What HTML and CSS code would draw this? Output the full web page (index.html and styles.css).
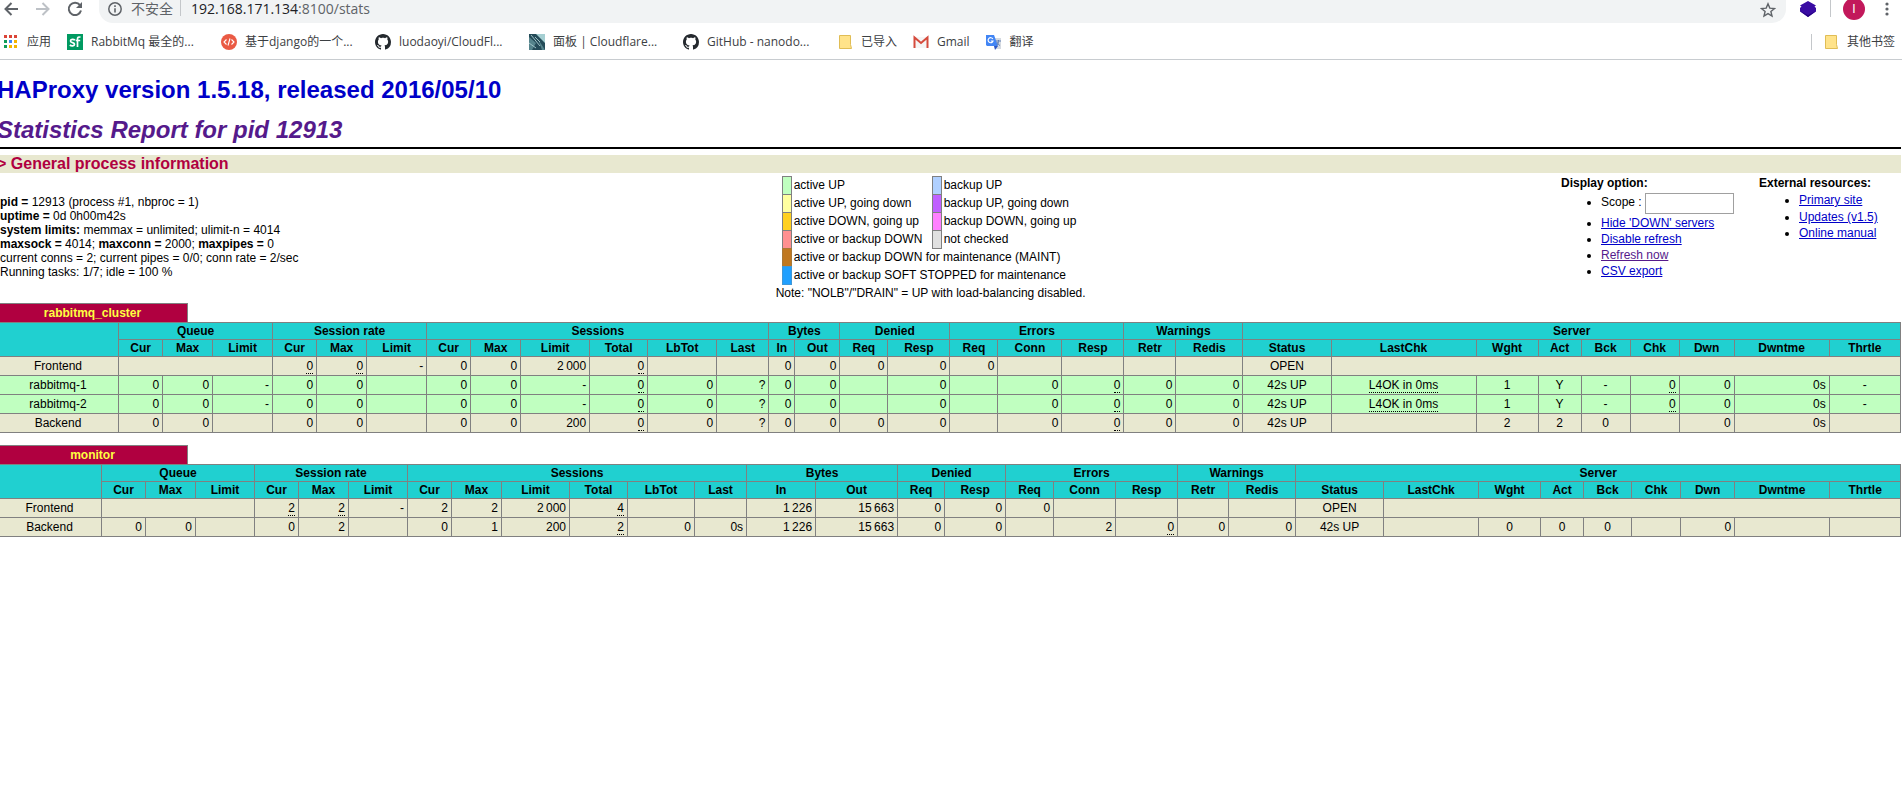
FILE: index.html
```
<!DOCTYPE html>
<html lang="en">
<head>
<meta charset="utf-8">
<title>Statistics Report for HAProxy</title>
<link rel="stylesheet" href="styles.css">
</head>
<body>
<header class="browser">
  <div class="toolbar">
    <button class="nav" aria-label="Back"><svg width="16" height="16" viewBox="0 0 16 16"><path d="M15 8H2.500M8.500 2 2.500 8l6 6" fill="none" stroke="#5f6368" stroke-width="2"/></svg></button>
    <button class="nav" aria-label="Forward"><svg width="16" height="16" viewBox="0 0 16 16"><path d="M1 8h12.500M7.500 2l6 6-6 6" fill="none" stroke="#bdc1c6" stroke-width="2"/></svg></button>
    <button class="nav" aria-label="Reload"><svg width="16" height="16" viewBox="0 0 16 16"><path d="M13 4.200A6.200 6.200 0 1 0 14 9.500" fill="none" stroke="#5f6368" stroke-width="2"/><path d="M15 1v6H9z" fill="#5f6368"/></svg></button>
    <div class="omnibox">
      <svg width="16" height="16" viewBox="0 0 16 16"><circle cx="8" cy="8" r="6.200" fill="none" stroke="#5f6368" stroke-width="1.500"/><path d="M8 7.200v4.200M8 4.300v1.600" stroke="#5f6368" stroke-width="1.600"/></svg>
      <span class="insecure">不安全</span>
      <span class="url">192.168.171.134<span class="path">:8100/stats</span></span>
      <button class="star" aria-label="Bookmark"><svg width="16" height="16" viewBox="0 0 16 16"><path d="m8 1.800 1.800 4.300 4.700.4-3.600 3 1.100 4.600L8 11.600l-4 2.500 1.100-4.600-3.600-3 4.700-.4z" fill="none" stroke="#5f6368" stroke-width="1.400"/></svg></button>
    </div>
    <button class="ext" aria-label="Extension"><svg width="16" height="16" viewBox="0 0 16 16"><path d="m8 0 8 4.500-1.500 1L16 7v3.500L8 16l-8-5.500V7l1.500-1.500L0 4.500z" fill="#3a0ca3"/><path d="m0 10 8 4 8-4-8 6z" fill="#250080"/></svg></button>
    <button class="avatar" aria-label="Profile">I</button>
    <button class="menu" aria-label="Menu"><svg width="4" height="16" viewBox="0 0 4 16"><g fill="#5f6368"><circle cx="2" cy="3" r="1.600"/><circle cx="2" cy="8" r="1.600"/><circle cx="2" cy="13" r="1.600"/></g></svg></button>
  </div>
  <nav class="bookmarks">
    <a href="#"><svg width="16" height="16" viewBox="0 0 16 16"><g fill="#db4437"><path d="M1 1h3v3H1zM6 1h3v3H6zM11 1h3v3h-3z"/></g><path d="M1 6h3v3H1z" fill="#0f9d58"/><path d="M6 6h3v3H6z" fill="#4285f4"/><path d="M11 6h3v3h-3zM6 11h3v3H6zM11 11h3v3h-3z" fill="#f4b400"/><path d="M1 11h3v3H1z" fill="#0f9d58"/></svg><span>应用</span></a>
    <a href="#" class="long"><svg width="16" height="16" viewBox="0 0 16 16"><path d="M0 0h16v16H0z" fill="#009a61"/><path d="M8 6.200C6.500 5 3.500 5 3.500 7c0 2 4 1.200 4 3.200 0 2-3.200 2-4.700.8M13.500 3.300c-2-.8-3 0-3 1.700v8M8.700 6.500h4.500" fill="none" stroke="#fff" stroke-width="1.700"/></svg><span>RabbitMq 最全的...</span></a>
    <a href="#" class="long"><svg width="16" height="16" viewBox="0 0 16 16"><circle cx="8" cy="8" r="8" fill="#ea5a44"/><path d="M5.500 5.500 3 8l2.500 2.500M10.500 5.500 13 8l-2.500 2.500M9 4.500l-2 7" fill="none" stroke="#fff" stroke-width="1.100"/></svg><span>基于django的一个...</span></a>
    <a href="#" class="long"><svg width="16" height="16" viewBox="0 0 16 16"><path d="M8 0C3.580 0 0 3.580 0 8c0 3.540 2.290 6.530 5.470 7.590.4.070.55-.17.55-.38 0-.19-.01-.82-.01-1.490-2.010.37-2.530-.49-2.690-.94-.09-.23-.48-.94-.82-1.130-.28-.15-.68-.52-.01-.53.63-.01 1.080.58 1.230.82.72 1.210 1.870.87 2.330.66.070-.52.28-.87.51-1.070-1.780-.2-3.640-.89-3.640-3.950 0-.87.31-1.590.82-2.150-.08-.2-.36-1.020.08-2.120 0 0 .67-.21 2.200.82.64-.18 1.320-.27 2-.27s1.360.09 2 .27c1.530-1.040 2.200-.82 2.200-.82.44 1.100.16 1.920.08 2.120.51.56.82 1.270.82 2.150 0 3.070-1.870 3.750-3.650 3.950.29.25.54.73.54 1.480 0 1.070-.01 1.930-.01 2.200 0 .21.15.46.55.38A8 8 0 0 0 16 8c0-4.420-3.580-8-8-8z" fill="#24292e"/></svg><span>luodaoyi/CloudFl...</span></a>
    <a href="#" class="long"><svg width="16" height="16" viewBox="0 0 16 16"><path d="M0 0h16v16H0z" fill="#244b58"/><path d="M7 0h9v9z" fill="#a5cfd2"/><path d="m0 3 7 6-4 7H0zM9 5l7 11h-3z" fill="#55848c"/><path d="m2 1 9 11M6 3l5 5M0 9l7 5" stroke="#9fc2c6" fill="none"/></svg><span>面板 | Cloudflare...</span></a>
    <a href="#" class="long"><svg width="16" height="16" viewBox="0 0 16 16"><path d="M8 0C3.580 0 0 3.580 0 8c0 3.540 2.290 6.530 5.470 7.590.4.070.55-.17.55-.38 0-.19-.01-.82-.01-1.490-2.010.37-2.530-.49-2.690-.94-.09-.23-.48-.94-.82-1.130-.28-.15-.68-.52-.01-.53.63-.01 1.080.58 1.230.82.72 1.210 1.870.87 2.330.66.070-.52.28-.87.51-1.070-1.780-.2-3.640-.89-3.640-3.950 0-.87.31-1.590.82-2.150-.08-.2-.36-1.020.08-2.120 0 0 .67-.21 2.200.82.64-.18 1.320-.27 2-.27s1.360.09 2 .27c1.530-1.040 2.200-.82 2.200-.82.44 1.100.16 1.920.08 2.120.51.56.82 1.270.82 2.150 0 3.070-1.870 3.750-3.650 3.950.29.25.54.73.54 1.480 0 1.070-.01 1.930-.01 2.200 0 .21.15.46.55.38A8 8 0 0 0 16 8c0-4.420-3.580-8-8-8z" fill="#24292e"/></svg><span>GitHub - nanodo...</span></a>
    <a href="#"><svg width="16" height="16" viewBox="0 0 16 16"><path d="M2.500 1.500h11v9l1 4h-12z" fill="#ffe38a" stroke="#e0bd55"/></svg><span>已导入</span></a>
    <a href="#"><svg width="16" height="16" viewBox="0 0 16 16"><path d="M1 3h14v11H1z" fill="#f5f5f5"/><path d="M1.500 14V3.500L8 9l6.500-5.500V14" fill="none" stroke="#d54b3d" stroke-width="2"/></svg><span>Gmail</span></a>
    <a href="#"><svg width="16" height="16" viewBox="0 0 16 16"><path d="M6 4h9v11H9z" fill="#d5dae1"/><path d="M0 1h8l4 11H1l-1-1z" fill="#4285f4"/><path d="m8 12 4 0-3 4z" fill="#2a56c6"/><path d="M6.800 5A2.500 2.500 0 1 0 7 7H4.800" fill="none" stroke="#fff" stroke-width="1.200"/><path d="M10 7h5M12.500 6v1.500c0 2-1 3-2 4M11 8c.5 2 2 3 3 3.500" fill="none" stroke="#5c7cb5"/></svg><span>翻译</span></a>
    <a href="#" class="other"><svg width="16" height="16" viewBox="0 0 16 16"><path d="M2.500 1.500h11v9l1 4h-12z" fill="#ffe38a" stroke="#e0bd55"/></svg><span>其他书签</span></a>
  </nav>
</header>
<main class="page">
  <h1><a href="#">HAProxy version 1.5.18, released 2016/05/10</a></h1>
  <h2><a href="#">Statistics Report for pid 12913</a></h2>
  <hr>
  <h3>&gt; General process information</h3>
  <section class="info">
    <p class="process"><b>pid = </b> 12913 (process #1, nbproc = 1)<br>
      <b>uptime = </b> 0d 0h00m42s<br>
      <b>system limits:</b> memmax = unlimited; ulimit-n = 4014<br>
      <b>maxsock = </b> 4014; <b>maxconn = </b> 2000; <b>maxpipes = </b> 0<br>
      current conns = 2; current pipes = 0/0; conn rate = 2/sec<br>
      Running tasks: 1/7; idle = 100 %</p>
    <div class="legend">
      <dl>
        <dt class="up"></dt><dd>active UP</dd><dt class="bup"></dt><dd>backup UP</dd>
        <dt class="goingdown"></dt><dd>active UP, going down</dd><dt class="bgoingdown"></dt><dd>backup UP, going down</dd>
        <dt class="goingup"></dt><dd>active DOWN, going up</dd><dt class="bgoingup"></dt><dd>backup DOWN, going up</dd>
        <dt class="down"></dt><dd>active or backup DOWN</dd><dt class="nocheck"></dt><dd>not checked</dd>
        <dt class="maint"></dt><dd class="wide">active or backup DOWN for maintenance (MAINT)</dd>
        <dt class="stopped"></dt><dd class="wide">active or backup SOFT STOPPED for maintenance</dd>
      </dl>
      <p>Note: "NOLB"/"DRAIN" = UP with load-balancing disabled.</p>
    </div>
    <div class="options">
      <b>Display option:</b>
      <ul>
        <li><label for="scope">Scope :</label> <input id="scope" type="text"></li>
        <li><a href="#">Hide 'DOWN' servers</a></li>
        <li><a href="#">Disable refresh</a></li>
        <li><a href="#" class="visited">Refresh now</a></li>
        <li><a href="#">CSV export</a></li>
      </ul>
    </div>
    <div class="resources">
      <b>External resources:</b>
      <ul>
        <li><a href="#">Primary site</a></li>
        <li><a href="#">Updates (v1.5)</a></li>
        <li><a href="#">Online manual</a></li>
      </ul>
    </div>
  </section>

  <section class="proxy">
    <div class="pxname">rabbitmq_cluster</div>
    <table class="tbl cluster">
      <colgroup><col><col><col><col><col><col><col><col><col><col><col><col><col><col><col><col><col><col><col><col><col><col><col><col><col><col><col><col><col><col><col></colgroup>
      <thead>
        <tr><th rowspan="2"></th><th colspan="3">Queue</th><th colspan="3">Session rate</th><th colspan="6">Sessions</th><th colspan="2">Bytes</th><th colspan="2">Denied</th><th colspan="3">Errors</th><th colspan="2">Warnings</th><th colspan="9">Server</th></tr>
        <tr><th>Cur</th><th>Max</th><th>Limit</th><th>Cur</th><th>Max</th><th>Limit</th><th>Cur</th><th>Max</th><th>Limit</th><th>Total</th><th>LbTot</th><th>Last</th><th>In</th><th>Out</th><th>Req</th><th>Resp</th><th>Req</th><th>Conn</th><th>Resp</th><th>Retr</th><th>Redis</th><th>Status</th><th>LastChk</th><th>Wght</th><th>Act</th><th>Bck</th><th>Chk</th><th>Dwn</th><th>Dwntme</th><th>Thrtle</th></tr>
      </thead>
      <tbody>
        <tr><td class="ac">Frontend</td><td colspan="3"></td><td><u>0</u></td><td><u>0</u></td><td>-</td><td>0</td><td>0</td><td>2&#8201;000</td><td><u>0</u></td><td></td><td></td><td>0</td><td>0</td><td>0</td><td>0</td><td>0</td><td></td><td></td><td></td><td></td><td class="ac">OPEN</td><td colspan="8"></td></tr>
        <tr class="active"><td class="ac">rabbitmq-1</td><td>0</td><td>0</td><td>-</td><td>0</td><td>0</td><td></td><td>0</td><td>0</td><td>-</td><td><u>0</u></td><td>0</td><td>?</td><td>0</td><td>0</td><td></td><td>0</td><td></td><td>0</td><td><u>0</u></td><td>0</td><td>0</td><td class="ac">42s UP</td><td class="ac"><u>L4OK in 0ms</u></td><td class="ac">1</td><td class="ac">Y</td><td class="ac">-</td><td><u>0</u></td><td>0</td><td>0s</td><td class="ac">-</td></tr>
        <tr class="active"><td class="ac">rabbitmq-2</td><td>0</td><td>0</td><td>-</td><td>0</td><td>0</td><td></td><td>0</td><td>0</td><td>-</td><td><u>0</u></td><td>0</td><td>?</td><td>0</td><td>0</td><td></td><td>0</td><td></td><td>0</td><td><u>0</u></td><td>0</td><td>0</td><td class="ac">42s UP</td><td class="ac"><u>L4OK in 0ms</u></td><td class="ac">1</td><td class="ac">Y</td><td class="ac">-</td><td><u>0</u></td><td>0</td><td>0s</td><td class="ac">-</td></tr>
        <tr><td class="ac">Backend</td><td>0</td><td>0</td><td></td><td>0</td><td>0</td><td></td><td>0</td><td>0</td><td>200</td><td><u>0</u></td><td>0</td><td>?</td><td>0</td><td>0</td><td>0</td><td>0</td><td></td><td>0</td><td><u>0</u></td><td>0</td><td>0</td><td class="ac">42s UP</td><td></td><td class="ac">2</td><td class="ac">2</td><td class="ac">0</td><td></td><td>0</td><td>0s</td><td></td></tr>
      </tbody>
    </table>
  </section>

  <section class="proxy">
    <div class="pxname">monitor</div>
    <table class="tbl monitor">
      <colgroup><col><col><col><col><col><col><col><col><col><col><col><col><col><col><col><col><col><col><col><col><col><col><col><col><col><col><col><col><col><col><col></colgroup>
      <thead>
        <tr><th rowspan="2"></th><th colspan="3">Queue</th><th colspan="3">Session rate</th><th colspan="6">Sessions</th><th colspan="2">Bytes</th><th colspan="2">Denied</th><th colspan="3">Errors</th><th colspan="2">Warnings</th><th colspan="9">Server</th></tr>
        <tr><th>Cur</th><th>Max</th><th>Limit</th><th>Cur</th><th>Max</th><th>Limit</th><th>Cur</th><th>Max</th><th>Limit</th><th>Total</th><th>LbTot</th><th>Last</th><th>In</th><th>Out</th><th>Req</th><th>Resp</th><th>Req</th><th>Conn</th><th>Resp</th><th>Retr</th><th>Redis</th><th>Status</th><th>LastChk</th><th>Wght</th><th>Act</th><th>Bck</th><th>Chk</th><th>Dwn</th><th>Dwntme</th><th>Thrtle</th></tr>
      </thead>
      <tbody>
        <tr><td class="ac">Frontend</td><td colspan="3"></td><td><u>2</u></td><td><u>2</u></td><td>-</td><td>2</td><td>2</td><td>2&#8201;000</td><td><u>4</u></td><td></td><td></td><td>1&#8201;226</td><td>15&#8201;663</td><td>0</td><td>0</td><td>0</td><td></td><td></td><td></td><td></td><td class="ac">OPEN</td><td colspan="8"></td></tr>
        <tr><td class="ac">Backend</td><td>0</td><td>0</td><td></td><td>0</td><td>2</td><td></td><td>0</td><td>1</td><td>200</td><td><u>2</u></td><td>0</td><td>0s</td><td>1&#8201;226</td><td>15&#8201;663</td><td>0</td><td>0</td><td></td><td>2</td><td><u>0</u></td><td>0</td><td>0</td><td class="ac">42s UP</td><td></td><td class="ac">0</td><td class="ac">0</td><td class="ac">0</td><td></td><td>0</td><td></td><td></td></tr>
      </tbody>
    </table>
  </section>
</main>
</body>
</html>
```
FILE: styles.css
```
* { box-sizing: border-box; }
body {
  margin: 0;
  overflow-x: hidden;
  background: #fff;
  color: #000;
  font: 12px/14px "Liberation Sans", Arial, sans-serif;
}
button { margin: 0; padding: 0; border: 0; background: none; }
svg { display: block; flex: none; }
p, ul, dl, dd, h1, h2, h3 { margin: 0; padding: 0; }

/* browser bar */
.browser {
  height: 60px;
  border-bottom: 1px solid #c8ccd0;
  color: #3c4043;
  font-family: "Open Sans", "Noto Sans CJK SC", sans-serif;
}
.toolbar {
  display: flex;
  height: 23px;
  padding: 0 13px 0 3px;
}
.nav { flex: none; width: 16px; height: 18px; margin-right: 16px; }
.omnibox {
  display: flex;
  flex: 1;
  height: 23px;
  padding: 0 10px 0 8px;
  border-radius: 0 0 14px 14px;
  background: #f1f3f4;
  font-size: 14px;
  line-height: 18px;
}
.omnibox svg, .ext svg, .menu svg { margin-top: 1px; }
.insecure {
  height: 16px;
  margin: 0 10px 0 8px;
  padding-right: 7px;
  border-right: 1px solid #c4c7ca;
  line-height: 18px;
  color: #5f6368;
}
.url { color: #202124; }
.path { color: #5f6368; }
.star { height: 18px; margin-left: auto; }
.ext {
  height: 17px;
  margin-left: 14px;
  padding-right: 14px;
  border-right: 1px solid #c4c7ca;
}
.avatar {
  width: 22px;
  height: 22px;
  margin: -2px 20px 0 12px;
  border-radius: 50%;
  background: #c2185b;
  color: #fff;
  font-size: 12px;
}
.menu { height: 17px; }
.bookmarks {
  display: flex;
  align-items: center;
  gap: 16px;
  height: 37px;
  padding: 0 7px 0 3px;
}
.bookmarks a {
  display: flex;
  align-items: center;
  gap: 8px;
  color: #3c4043;
  text-decoration: none;
  line-height: 16px;
  white-space: nowrap;
}
.bookmarks .long { width: 138px; }
.bookmarks .other {
  margin-left: auto;
  padding-left: 11px;
  border-left: 1px solid #c4c7ca;
}

/* report */
.page { margin: 0 1px 0 -3px; }
h1, h2 { font-size: 24px; line-height: 28px; }
h1 { padding-top: 16px; }
h2 { padding-top: 12px; font-style: italic; }
h1 a { color: #0000c8; text-decoration: none; }
h2 a { color: #551a8b; text-decoration: none; }
hr { margin: 3px 0 6px; border: 0; border-top: 2px solid #000; }
h3 {
  background: #e8e8d0;
  color: #b00040;
  font-size: 16px;
  line-height: 18px;
}
.info { display: flex; height: 130px; }
.process { flex: 0 0 41%; padding: 22px 0 0 3px; }
.legend { margin-left: -2px; padding-top: 3px; }
.legend dl {
  display: grid;
  grid-template-columns: 10px 140px 10px 150px;
  grid-auto-rows: 18px;
  margin-left: 6px;
}
.legend dt { height: 19px; border: 1px solid gray; }
.legend dd { padding: 2px; white-space: nowrap; }
.legend .wide { grid-column: span 3; }
.legend p { padding-top: 2px; }
.up { background: #c0ffc0; }
.bup { background: #b0d0ff; }
.goingdown { background: #ffffa0; }
.bgoingdown { background: #c060ff; }
.goingup { background: #ffd020; }
.bgoingup { background: #ff80ff; }
.down { background: #ff9090; }
.nocheck { background: #e0e0e0; }
.legend .maint { background: #c07820; border-color: #a87838; }
.legend .stopped { background: #20a0ff; border-color: #4098d8; }
.options { flex: 0 0 198px; margin-left: auto; padding-top: 3px; }
.resources { flex: 0 0 142px; padding-top: 3px; }
.info ul { padding-left: 40px; }
.info li { margin-top: 3px; white-space: nowrap; }
.info li:nth-child(n+3) { margin-top: 2px; }
.info li a { color: #0000c8; }
.info li .visited { color: #551a8b; }
.info input {
  width: 89px;
  height: 21px;
  margin: 0 0 -1px;
  padding: 1px 2px;
  border: 1px solid #a0a0a0;
  font: inherit;
  vertical-align: middle;
}

/* proxy tables */
.proxy { margin-bottom: 12px; }
.pxname {
  width: 10%;
  min-width: 191px;
  padding: 2px;
  border: 1px solid gray;
  border-bottom: 0;
  background: #b00040;
  color: #ffff40;
  font-weight: bold;
  text-align: center;
}
.tbl {
  width: 100%;
  table-layout: fixed;
  border-collapse: collapse;
  line-height: 14px;
}
.tbl th, .tbl td { border: 1px solid gray; white-space: nowrap; }
.tbl th { padding: 1px 0; background: #20d0d0; }
.tbl td { height: 19px; padding: 2px 3px; background: #e8e8d0; text-align: right; }
.tbl .ac { text-align: center; }
.tbl .active td { background: #c0ffc0; }
.tbl u { border-bottom: 1px dotted #000; text-decoration: none; }

col:nth-child(2), col:nth-child(5), col:nth-child(8) { width: 44px; }
col:nth-child(3), col:nth-child(6), col:nth-child(9) { width: 50px; }
col:nth-child(4), col:nth-child(7) { width: 59px; }
col:nth-child(10) { width: 68px; }
col:nth-child(11) { width: 58px; }
col:nth-child(12) { width: 67px; }
col:nth-child(13) { width: 52px; }
col:nth-child(16), col:nth-child(18) { width: 48px; }
col:nth-child(17), col:nth-child(19), col:nth-child(20) { width: 62px; }
col:nth-child(21) { width: 52px; }
col:nth-child(22) { width: 67px; }
col:nth-child(23) { width: 88px; }
col:nth-child(25) { width: 62px; }
col:nth-child(26) { width: 43px; }
col:nth-child(27), col:nth-child(28) { width: 49px; }
col:nth-child(29) { width: 55px; }
col:nth-child(30) { width: 95px; }
col:nth-child(31) { width: 71px; }
.cluster col:nth-child(1) { width: 121px; }
.cluster col:nth-child(4), .cluster col:nth-child(7) { width: 60px; }
.cluster col:nth-child(10), .cluster col:nth-child(12) { width: 69px; }
.cluster col:nth-child(14) { width: 26px; }
.cluster col:nth-child(15) { width: 45px; }
.cluster col:nth-child(19) { width: 64px; }
.cluster col:nth-child(24) { width: 145px; }
.monitor col:nth-child(1) { width: 104px; }
.monitor col:nth-child(14) { width: 69px; }
.monitor col:nth-child(15) { width: 82px; }
.monitor col:nth-child(16) { width: 47px; }
.monitor col:nth-child(17) { width: 61px; }
.monitor col:nth-child(21) { width: 51px; }
.monitor col:nth-child(24) { width: 95px; }
.monitor col:nth-child(27) { width: 48px; }
.monitor col:nth-child(29) { width: 54px; }
```
